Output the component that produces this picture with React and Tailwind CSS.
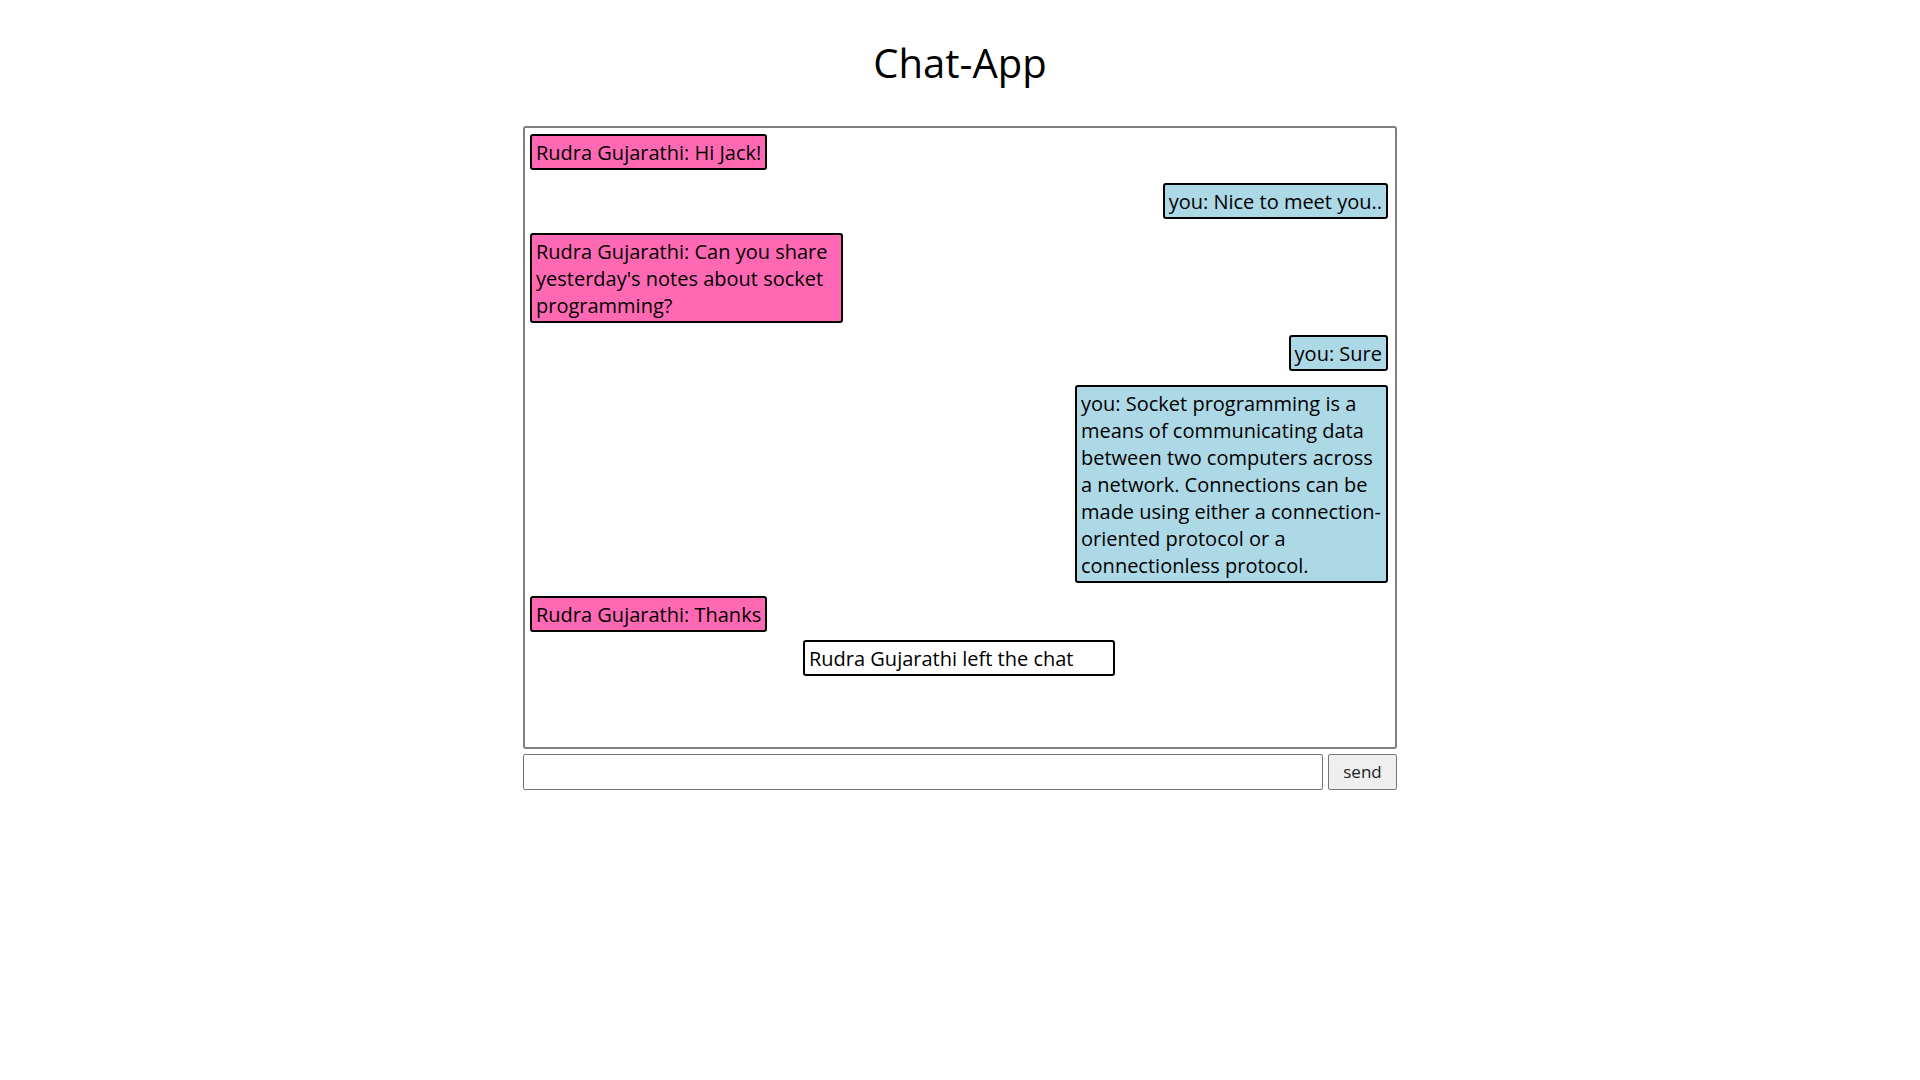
import React, { useState } from "react";

const messages = [
  { id: 1, type: "in", text: "Rudra Gujarathi: Hi Jack!", gap: "mt-0" },
  { id: 2, type: "out", text: "you: Nice to meet you..", gap: "mt-[13px]" },
  {
    id: 3,
    type: "in",
    text: "Rudra Gujarathi: Can you share yesterday's notes about socket programming?",
    gap: "mt-[14px]",
  },
  { id: 4, type: "out", text: "you: Sure", gap: "mt-[12px]" },
  {
    id: 5,
    type: "out",
    text: "you: Socket programming is a means of communicating data between two computers across a network. Connections can be made using either a connection-oriented protocol or a connectionless protocol.",
    gap: "mt-[14px]",
  },
  { id: 6, type: "in", text: "Rudra Gujarathi: Thanks", gap: "mt-[13px]" },
  { id: 7, type: "info", text: "Rudra Gujarathi left the chat", gap: "mt-[8px]" },
];

const Message = ({ msg }) => {
  if (msg.type === "info") {
    return (
      <div className={`${msg.gap} self-center w-[312px] border-2 border-black rounded-[3px] bg-white px-[4px] py-[2.5px]`}>
        {msg.text}
      </div>
    );
  }
  return (
    <div
      className={`${msg.gap} max-w-[313px] border-2 border-black rounded-[3px] px-[4px] py-[2.5px] ${
        msg.type === "in" ? "self-start bg-[#ff69b4]" : "self-end bg-[#add8e6]"
      }`}
    >
      {msg.text}
    </div>
  );
};

export default function App() {
  const [draft, setDraft] = useState("");

  return (
    <div className="min-h-screen bg-white text-black font-['Open_Sans',sans-serif]">
      <h1 className="pt-[36px] text-center text-[40px] leading-[54px] font-normal">Chat-App</h1>

      <div className="mx-auto mt-[36px] w-[874px]">
        {/* Messages */}
        <div className="h-[623px] border-2 border-[#808080] rounded-[3px] pl-[5px] pr-[7px] pt-[6px] flex flex-col text-[20px] leading-[27px] text-black">
          {messages.map((m) => (
            <Message key={m.id} msg={m} />
          ))}
        </div>

        {/* Input row */}
        <div className="mt-[5px] flex gap-[5px]">
          <input
            value={draft}
            onChange={(e) => setDraft(e.target.value)}
            className="w-[800px] h-[36px] border border-[#767676] rounded-[2px] px-2 text-[17px] outline-none"
          />
          <button className="w-[69px] h-[36px] bg-[#efefef] border border-[#767676] rounded-[2px] text-[17px] text-[#222]">
            send
          </button>
        </div>
      </div>
    </div>
  );
}
